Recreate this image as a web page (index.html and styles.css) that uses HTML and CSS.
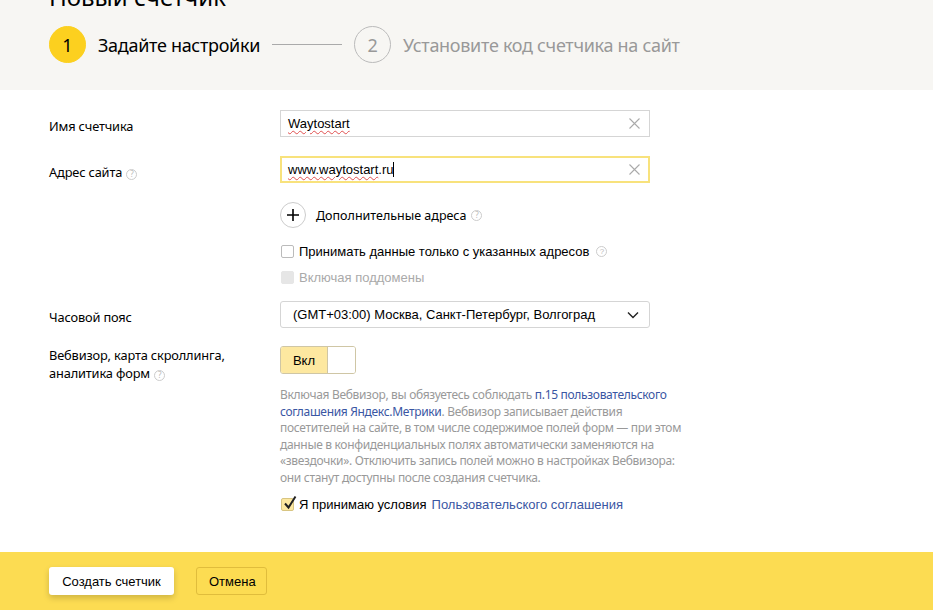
FILE: index.html
```html
<!DOCTYPE html>
<html lang="ru">
<head>
<meta charset="utf-8">
<title>Новый счетчик</title>
<link rel="stylesheet" href="styles.css">
</head>
<body>
<header class="head">
  <h1 class="title">Новый счетчик</h1>
  <div class="steps">
    <div class="step active"><span class="num">1</span><span class="step-text">Задайте настройки</span></div>
    <span class="step-line"></span>
    <div class="step"><span class="num">2</span><span class="step-text">Установите код счетчика на сайт</span></div>
  </div>
</header>

<main class="form">
  <div class="row r-name">
    <div class="label">Имя счетчика</div>
    <div class="field">
      <div class="input"><span class="val spell">Waytostart</span><svg class="clear" width="11" height="11" viewBox="0 0 11 11"><path d="M0.5 0.5 L10.5 10.5 M10.5 0.5 L0.5 10.5" stroke="#aaa" stroke-width="1.1"/></svg></div>
    </div>
  </div>

  <div class="row r-addr">
    <div class="label">Адрес сайта <span class="hint">?</span></div>
    <div class="field">
      <div class="input focus"><span class="val"><span class="spell">www.waytostart</span>.ru<span class="caret"></span></span><svg class="clear" width="11" height="11" viewBox="0 0 11 11"><path d="M0.5 0.5 L10.5 10.5 M10.5 0.5 L0.5 10.5" stroke="#aaa" stroke-width="1.1"/></svg></div>
      <div class="add"><span class="plus"><svg width="12" height="12" viewBox="0 0 12 12"><path d="M6 0 V12 M0 6 H12" stroke="#000" stroke-width="1.6"/></svg></span><span class="add-text">Дополнительные адреса</span> <span class="hint">?</span></div>
      <label class="check first"><span class="box"></span>Принимать данные только с указанных адресов <span class="hint">?</span></label>
      <label class="check disabled"><span class="box"></span>Включая поддомены</label>
    </div>
  </div>

  <div class="row r-tz">
    <div class="label">Часовой пояс</div>
    <div class="field">
      <div class="select"><span>(GMT+03:00) Москва, Санкт-Петербург, Волгоград</span>
        <svg class="chev" width="12" height="8" viewBox="0 0 12 8"><path d="M1 1.5 L6 6.5 L11 1.5" fill="none" stroke="#222" stroke-width="1.4"/></svg>
      </div>
    </div>
  </div>

  <div class="row r-wv">
    <div class="label">Вебвизор, карта скроллинга,<br>аналитика форм <span class="hint">?</span></div>
    <div class="field">
      <div class="toggle"><span class="on">Вкл</span><span class="knob"></span></div>
      <p class="note">Включая Вебвизор, вы обязуетесь соблюдать <a href="#">п.15 пользовательского соглашения Яндекс.Метрики</a>. Вебвизор записывает действия посетителей на сайте, в том числе содержимое полей форм — при этом данные в конфиденциальных полях автоматически заменяются на «звездочки». Отключить запись полей можно в настройках Вебвизора: они станут доступны после создания счетчика.</p>
      <label class="check accept"><span class="box checked"><svg width="16" height="16" viewBox="0 0 16 16"><path d="M3 8.5 L6.5 12.5 L13.5 1.5" fill="none" stroke="#222" stroke-width="2"/></svg></span>Я принимаю условия <a href="#">Пользовательского соглашения</a></label>
    </div>
  </div>
</main>

<footer class="foot">
  <button class="btn primary">Создать счетчик</button>
  <button class="btn ghost">Отмена</button>
</footer>
</body>
</html>
```

FILE: styles.css
```css
* { box-sizing: border-box; }
html, body { margin: 0; padding: 0; }
body {
  width: 933px;
  height: 610px;
  overflow: hidden;
  background: #fff;
  font-family: "Noto Sans", "Open Sans", sans-serif;
  color: #000;
  display: flex;
  flex-direction: column;
}

.head {
  background: #f7f6f3;
  height: 90px;
  padding: 0 0 0 49px;
  flex-shrink: 0;
}
.title {
  margin: -17px 0 0 0;
  font-size: 24px;
  font-weight: 400;
  line-height: 28px;
  height: 11px;
}
.steps {
  display: flex;
  align-items: center;
  margin-top: 32px;
}
.step { display: flex; align-items: center; }
.num {
  width: 37px;
  height: 37px;
  border-radius: 50%;
  border: 1px solid #bbb;
  color: #999;
  display: flex;
  align-items: center;
  justify-content: center;
  font-size: 18px;
}
.step.active .num { background: #fcd01f; border-color: #fcd01f; color: #000; }
.step-text {
  margin-left: 12px;
  font-size: 18px;
  color: #999;
  letter-spacing: -0.3px;
}
.step.active .step-text { color: #000; }
.step-line {
  width: 70px;
  height: 1px;
  background: #aaa;
  margin: 0 12px 0 12px;
}

.form {
  flex: 1;
  padding: 20px 0 0 49px;
  display: flex;
  flex-direction: column;
}
.row {
  display: grid;
  grid-template-columns: 231px 370px;
}
.label {
  font-size: 12.8px;
  letter-spacing: -0.15px;
  line-height: 18px;
  color: #000;
  padding-top: 7px;
}
.hint {
  display: inline-flex;
  width: 11px;
  height: 11px;
  border: 1px solid #ccc;
  border-radius: 50%;
  font-size: 8px;
  color: #bbb;
  align-items: center;
  justify-content: center;
  vertical-align: 0;
  line-height: 1;
  margin-left: 1px;
  letter-spacing: 0;
}
.field { display: flex; flex-direction: column; }
.input {
  height: 27px;
  border: 1px solid #d5d5d5;
  display: flex;
  align-items: center;
  justify-content: space-between;
  padding: 0 9px 0 7px;
  font-family: "Liberation Sans", Arial, sans-serif;
  font-size: 13px;
}
.input.focus { border: 2px solid #f8e27c; padding-left: 6px; padding-right: 8px; }
.spell {
  text-decoration: underline wavy #e05050;
  text-decoration-thickness: 1px;
  text-underline-offset: 2px;
}
.caret {
  display: inline-block;
  width: 1px;
  height: 15px;
  background: #000;
  vertical-align: -3px;
}

.r-addr { margin-top: 19px; }
.add {
  display: flex;
  align-items: center;
  margin-top: 19px;
  font-size: 12.5px;
}
.plus {
  width: 26px;
  height: 26px;
  border-radius: 50%;
  border: 1px solid #ccc;
  display: flex;
  align-items: center;
  justify-content: center;
  margin-right: 10px;
}
.add-text { margin-right: 4px; }
.check {
  display: flex;
  align-items: center;
  font-family: "Liberation Sans", Arial, sans-serif;
  font-size: 13px;
  gap: 5px;
}
.check.first { margin-top: 16px; }
.check.disabled { margin-top: 11px; color: #aaa; }
.check .hint { margin-left: 2px; }
.box {
  width: 13px;
  height: 13px;
  border: 1px solid #bbb;
  border-radius: 2px;
  margin-left: 1px;
  position: relative;
  background: #fff;
}
.check.disabled .box { background: #e6e6e6; border-color: #e6e6e6; }

.r-tz { margin-top: 16px; }
.select {
  height: 27px;
  border: 1px solid #d5d5d5;
  border-radius: 3px;
  display: flex;
  align-items: center;
  justify-content: space-between;
  padding: 0 10px 0 12px;
  font-family: "Liberation Sans", Arial, sans-serif;
  font-size: 13px;
}

.r-wv { margin-top: 18px; }
.r-wv .label { padding-top: 0; }
.toggle {
  width: 76px;
  height: 28px;
  border: 1px solid #cfc6a5;
  border-radius: 3px;
  display: flex;
  overflow: hidden;
  font-family: "Liberation Sans", Arial, sans-serif;
  font-size: 13px;
}
.toggle .on {
  width: 47px;
  background: #fde8a0;
  display: flex;
  align-items: center;
  justify-content: center;
  border-right: 1px solid #cfc6a5;
}
.toggle .knob { flex: 1; background: #fff; }
.note {
  margin: 13px 0 0 0;
  width: 410px;
  font-size: 12px;
  line-height: 16.5px;
  color: #999;
  letter-spacing: -0.32px;
}
a { color: #3a56a3; text-decoration: none; }
.accept { margin-top: 11px; }
.box.checked {
  background: #fde8a0;
  border-color: #d8c582;
}
.box.checked svg { position: absolute; left: 0; top: -4px; }

.foot {
  height: 58px;
  background: #fcdc52;
  display: flex;
  align-items: center;
  gap: 22px;
  padding-left: 49px;
  flex-shrink: 0;
}
.btn {
  height: 28px;
  font-family: "Liberation Sans", Arial, sans-serif;
  font-size: 13px;
  border-radius: 3px;
  padding: 0 12px;
  cursor: pointer;
  color: #000;
}
.btn.primary {
  width: 125px;
  background: #fff;
  border: none;
  box-shadow: 0 3px 6px rgba(0,0,0,0.18);
}
.btn.ghost {
  width: 71px;
  background: transparent;
  border: 1px solid #e0bd3c;
}
```
